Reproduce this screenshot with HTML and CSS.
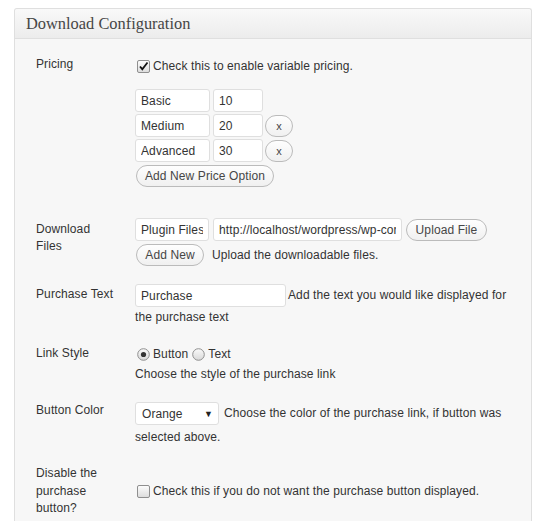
FILE: index.html
```html
<!DOCTYPE html>
<html>
<head>
<meta charset="utf-8">
<link rel="stylesheet" href="styles.css">
</head>
<body>
<div class="postbox">
  <h3 class="hndle">Download Configuration</h3>
  <div class="inside">
    <div class="row row-pricing">
      <div class="label">Pricing</div>
      <div class="field">
        <div class="checkline">
          <span class="cb"><svg width="13" height="13" viewBox="0 0 13 13"><defs><linearGradient id="g1" x1="0" y1="0" x2="0" y2="1"><stop offset="0" stop-color="#fdfdfd"/><stop offset="1" stop-color="#dcdcdc"/></linearGradient></defs><rect x="0.5" y="0.5" width="12" height="12" rx="1.5" fill="url(#g1)" stroke="#8f8f8f"/><path d="M3 6.5 L5.3 9.2 L10.5 2.5" fill="none" stroke="#111" stroke-width="1.8"/></svg></span>Check this to enable variable pricing.
        </div>
        <div class="prices">
          <div class="price-row"><input class="inp name" value="Basic"><input class="inp amt" value="10"></div>
          <div class="price-row"><input class="inp name" value="Medium"><input class="inp amt" value="20"><button class="btn btn-x">x</button></div>
          <div class="price-row"><input class="inp name" value="Advanced"><input class="inp amt" value="30"><button class="btn btn-x">x</button></div>
        </div>
        <button class="btn btn-add">Add New Price Option</button>
      </div>
    </div>

    <div class="row row-files">
      <div class="label">Download<br>Files</div>
      <div class="field">
        <div class="files-line"><input class="inp fname" value="Plugin Files"><input class="inp furl" value="http://localhost/wordpress/wp-content/uploads/plugin.zip"><button class="btn btn-upload">Upload File</button></div>
        <div class="files-line2"><button class="btn btn-new">Add New</button><span class="desc">Upload the downloadable files.</span></div>
      </div>
    </div>

    <div class="row row-ptext">
      <div class="label">Purchase Text</div>
      <div class="field flow"><input class="inp ptext" value="Purchase"><span class="after">Add the text you would like displayed for the purchase text</span></div>
    </div>

    <div class="row row-link">
      <div class="label">Link Style</div>
      <div class="field flow">
        <div class="radios">
          <span class="rd"><svg width="13" height="13" viewBox="0 0 13 13"><defs><linearGradient id="g2" x1="0" y1="0" x2="0" y2="1"><stop offset="0" stop-color="#fafafa"/><stop offset="1" stop-color="#d8d8d8"/></linearGradient></defs><circle cx="6.5" cy="6.5" r="5.8" fill="url(#g2)" stroke="#8f8f8f"/><circle cx="6.5" cy="6.5" r="2.6" fill="#333"/></svg></span>Button
          <span class="rd rd2"><svg width="13" height="13" viewBox="0 0 13 13"><defs><linearGradient id="g3" x1="0" y1="0" x2="0" y2="1"><stop offset="0" stop-color="#fafafa"/><stop offset="1" stop-color="#d8d8d8"/></linearGradient></defs><circle cx="6.5" cy="6.5" r="5.8" fill="url(#g3)" stroke="#8f8f8f"/></svg></span>Text
        </div>
        <div>Choose the style of the purchase link</div>
      </div>
    </div>

    <div class="row row-color">
      <div class="label">Button Color</div>
      <div class="field flow"><span class="select"><span class="sel-val">Orange</span><span class="arrow">▼</span></span><span class="after2">Choose the color of the purchase link, if button was selected above.</span></div>
    </div>

    <div class="row row-disable">
      <div class="label">Disable the<br>purchase<br>button?</div>
      <div class="field">
        <div class="checkline"><span class="cb"><svg width="13" height="13" viewBox="0 0 13 13"><defs><linearGradient id="g4" x1="0" y1="0" x2="0" y2="1"><stop offset="0" stop-color="#fdfdfd"/><stop offset="1" stop-color="#dcdcdc"/></linearGradient></defs><rect x="0.5" y="0.5" width="12" height="12" rx="1.5" fill="url(#g4)" stroke="#8f8f8f"/></svg></span>Check this if you do not want the purchase button displayed.</div>
      </div>
    </div>
  </div>
</div>
</body>
</html>
```

FILE: styles.css
```css
html, body {
  background: #ffffff;
}
body {
  margin: 8px 0 0 14px;
  font-family: "Liberation Sans", Arial, sans-serif;
  font-size: 12px;
  letter-spacing: 0.1px;
  color: #333;
}
.postbox {
  width: 518px;
  box-sizing: border-box;
  border: 1px solid #dfdfdf;
  border-bottom: none;
  border-radius: 3px 3px 0 0;
  background: #f7f7f7;
  height: 520px;
}
.hndle {
  margin: 0;
  height: 30px;
  box-sizing: border-box;
  border-bottom: 1px solid #dfdfdf;
  background: linear-gradient(#f9f9f9, #ececec);
  font-family: "Liberation Serif", Georgia, serif;
  font-weight: normal;
  font-size: 16.4px;
  letter-spacing: 0;
  color: #464646;
  padding: 6px 11px 0;
  line-height: 18px;
  border-radius: 3px 3px 0 0;
}
.inside {
  padding: 16px 0 0 21px;
}
.row {
  display: grid;
  grid-template-columns: 99px 1fr;
  align-items: start;
}
.label {
  line-height: 17.5px;
  padding-top: 1px;
}
.field {
  line-height: 20px;
}
.checkline {
  display: flex;
  align-items: center;
  line-height: 20px;
}
.cb, .rd {
  display: inline-flex;
  width: 13px;
  height: 13px;
  margin: 0 3px 0 2px;
}
.row-pricing .checkline {
  margin-top: 1px;
}
.prices {
  margin-top: 13px;
  display: flex;
  flex-direction: column;
  gap: 2px;
}
.price-row {
  display: flex;
  gap: 3px;
  align-items: center;
}
.inp {
  box-sizing: border-box;
  height: 23px;
  border: 1px solid #dfdfdf;
  border-radius: 3px;
  background: #fff;
  font-family: "Liberation Sans", Arial, sans-serif;
  font-size: 12px;
  letter-spacing: 0.1px;
  color: #333;
  padding: 0 5px;
  margin: 0;
  outline: none;
}
.name { width: 75px; }
.amt { width: 50px; }
.btn {
  box-sizing: border-box;
  font-family: "Liberation Sans", Arial, sans-serif;
  font-size: 12px;
  letter-spacing: 0.1px;
  white-space: nowrap;
  color: #464646;
  border: 1px solid #bbb;
  border-radius: 11px;
  background: linear-gradient(#fefefe, #f0f0f0);
  height: 22px;
  padding: 0 6px;
  margin: 0;
  line-height: 18px;
  cursor: pointer;
}
.btn-x {
  width: 28px;
  padding: 0;
  font-size: 11px;
  margin-left: -1px;
}
.btn-add {
  margin-top: 3px;
  margin-left: 1px;
  width: 138px;
}
.row-files {
  margin-top: 31px;
}
.row-files .label {
  padding-top: 2.5px;
}
.files-line {
  display: flex;
  gap: 4px;
  align-items: center;
}
.fname { width: 74px; }
.furl { width: 189px; }
.btn-upload { width: 81px; }
.files-line2 {
  margin-top: 3px;
  display: flex;
  align-items: center;
}
.btn-new {
  margin-left: 1px;
  width: 68px;
}
.desc {
  margin-left: 8px;
}
.row-ptext {
  margin-top: 18px;
  grid-template-columns: 99px 375px;
}
.row-ptext .label {
  padding-top: 2px;
}
.ptext {
  width: 151px;
  vertical-align: middle;
  margin-right: 2px;
}
.row-link {
  margin-top: 17px;
}
.radios {
  display: flex;
  align-items: center;
}
.rd2 {
  margin-left: 4px;
}
.row-color {
  margin-top: 17px;
  grid-template-columns: 99px 372px;
}
.row-color .field {
  line-height: 24px;
}
.select {
  display: inline-flex;
  align-items: center;
  justify-content: space-between;
  box-sizing: border-box;
  width: 84px;
  height: 23px;
  border: 1px solid #dfdfdf;
  border-radius: 3px;
  background: #fff;
  padding: 0 5px 0 6px;
  vertical-align: middle;
  margin-right: 5px;
  line-height: 20px;
}
.arrow {
  font-size: 9px;
  color: #222;
}
.row-disable {
  margin-top: 15px;
  align-items: center;
}
```
